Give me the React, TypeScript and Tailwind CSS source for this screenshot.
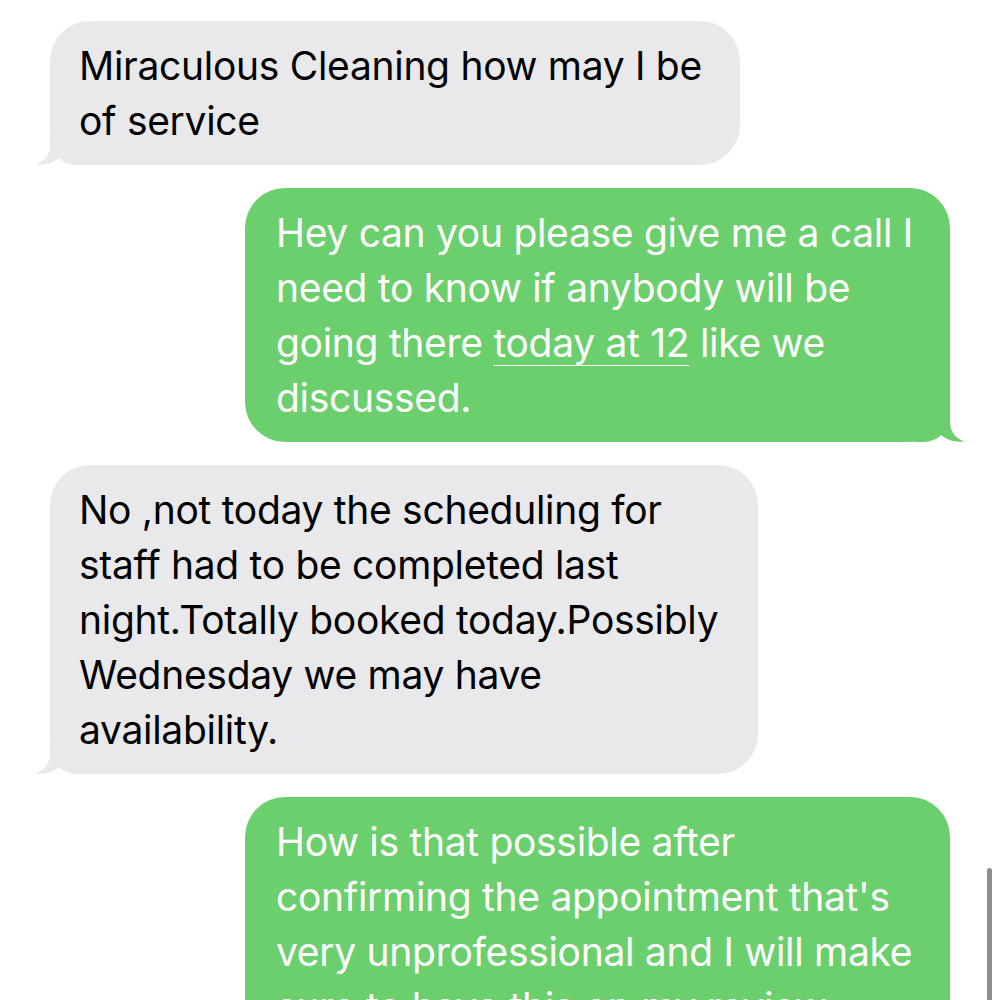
const Tail = ({ color, flip }: { color: string; flip?: boolean }) => (
  <svg
    width="50"
    height="40"
    viewBox="0 0 50 40"
    className={flip ? 'absolute bottom-0 -right-[14px] -scale-x-100' : 'absolute bottom-0 -left-[14px]'}
  >
    <path
      d="M14 0 L14 20 C14 30 8 36 0 39.5 C9 40.5 17 38 23 33 C27 37 32 39.5 40 40 L50 40 L50 0 Z"
      fill={color}
    />
  </svg>
);

const Received = ({ children, width }: { children: React.ReactNode; width: string }) => (
  <div className={`relative ml-[50px] ${width}`}>
    <div className="relative z-10 rounded-[40px] bg-[#e9e9eb] pl-[29px] pr-4 pt-[17px] pb-[17px] text-black">
      {children}
    </div>
    <Tail color="#e9e9eb" />
  </div>
);

const Sent = ({ children }: { children: React.ReactNode }) => (
  <div className="relative ml-[245px] w-[705px]">
    <div className="relative z-10 rounded-[40px] bg-[#6bcf6e] pl-[31px] pr-4 pt-[17px] pb-[17px] text-white">
      {children}
    </div>
    <Tail color="#6bcf6e" flip />
  </div>
);

export default function App() {
  return (
    <div
      className="relative h-[1000px] overflow-hidden bg-white text-[39px] leading-[55px] tracking-[-0.3px]"
      style={{ fontFamily: 'Inter, "Noto Sans", sans-serif' }}
    >
      <div className="flex flex-col gap-[23px] pt-[21px]">
        <Received width="w-[690px]">
          Miraculous Cleaning how may I be
          <br />
          of service
        </Received>

        <Sent>
          Hey can you please give me a call I
          <br />
          need to know if anybody will be
          <br />
          going there{' '}
          <span className="underline decoration-1 underline-offset-[8px]">today at 12</span> like we
          <br />
          discussed.
        </Sent>

        <Received width="w-[708px]">
          No ,not today the scheduling for
          <br />
          staff had to be completed last
          <br />
          night.Totally booked today.Possibly
          <br />
          Wednesday we may have
          <br />
          availability.
        </Received>

        <Sent>
          How is that possible after
          <br />
          confirming the appointment that's
          <br />
          very unprofessional and I will make
          <br />
          sure to have this on my review
        </Sent>
      </div>

      {/* scroll indicator */}
      <div className="absolute right-[8px] top-[868px] h-[160px] w-[5px] rounded-full bg-[#8f8f8f]" />
    </div>
  );
}
